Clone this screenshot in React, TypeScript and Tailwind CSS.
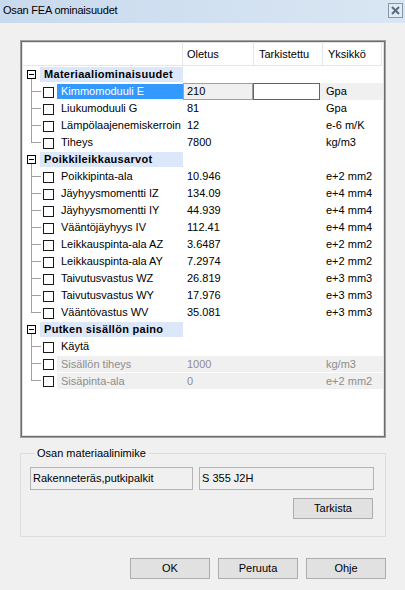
import React from 'react';

type Item = { label: string; value: string; unit: string; state?: 'selected' | 'disabled' };
type Group = { name: string; items: Item[] };

const groups: Group[] = [
  {
    name: 'Materiaaliominaisuudet',
    items: [
      { label: 'Kimmomoduuli E', value: '210', unit: 'Gpa', state: 'selected' },
      { label: 'Liukumoduuli G', value: '81', unit: 'Gpa' },
      { label: 'Lämpölaajenemiskerroin', value: '12', unit: 'e-6 m/K' },
      { label: 'Tiheys', value: '7800', unit: 'kg/m3' },
    ],
  },
  {
    name: 'Poikkileikkausarvot',
    items: [
      { label: 'Poikkipinta-ala', value: '10.946', unit: 'e+2 mm2' },
      { label: 'Jäyhyysmomentti IZ', value: '134.09', unit: 'e+4 mm4' },
      { label: 'Jäyhyysmomentti IY', value: '44.939', unit: 'e+4 mm4' },
      { label: 'Vääntöjäyhyys IV', value: '112.41', unit: 'e+4 mm4' },
      { label: 'Leikkauspinta-ala AZ', value: '3.6487', unit: 'e+2 mm2' },
      { label: 'Leikkauspinta-ala AY', value: '7.2974', unit: 'e+2 mm2' },
      { label: 'Taivutusvastus WZ', value: '26.819', unit: 'e+3 mm3' },
      { label: 'Taivutusvastus WY', value: '17.976', unit: 'e+3 mm3' },
      { label: 'Vääntövastus WV', value: '35.081', unit: 'e+3 mm3' },
    ],
  },
  {
    name: 'Putken sisällön paino',
    items: [
      { label: 'Käytä', value: '', unit: '' },
      { label: 'Sisällön tiheys', value: '1000', unit: 'kg/m3', state: 'disabled' },
      { label: 'Sisäpinta-ala', value: '0', unit: 'e+2 mm2', state: 'disabled' },
    ],
  },
];

function Checkbox() {
  return <span className="block w-[11px] h-[11px] border border-[#1a1a1a] bg-white" />;
}

function TreeBranch({ last }: { last: boolean }) {
  return (
    <div className="relative w-[18px] h-[17px] shrink-0">
      <span
        className={
          last
            ? 'absolute left-[8px] top-0 w-px h-[9px] bg-[#a0a0a0]'
            : 'absolute left-[8px] top-0 w-px h-[17px] bg-[#a0a0a0]'
        }
      />
      <span className="absolute left-[8px] top-[8px] h-px w-[10px] bg-[#a0a0a0]" />
    </div>
  );
}

function GroupRow({ name }: { name: string }) {
  return (
    <div className="flex h-[17px]">
      <div className="relative w-[17px] shrink-0">
        <span className="absolute left-[4px] top-[4px] w-[9px] h-[9px] border border-black bg-white" />
        <span className="absolute left-[6px] top-[8px] w-[5px] h-px bg-black" />
        <span className="absolute left-[8px] top-[13px] w-px h-[4px] bg-[#a0a0a0]" />
      </div>
      <div className="w-[143px] mt-px h-[15px] bg-[#dce7fa] pl-[4px] font-bold tracking-[0.3px] leading-[15px] text-black whitespace-nowrap">
        {name}
      </div>
    </div>
  );
}

function ItemRow({ item, last }: { item: Item; last: boolean }) {
  const lead = (
    <>
      <TreeBranch last={last} />
      <div className="w-[16px] shrink-0 pl-[2px] pt-[4px]">
        <Checkbox />
      </div>
    </>
  );

  if (item.state === 'selected') {
    return (
      <div className="flex h-[17px]">
        {lead}
        <div className="w-[126px] mt-px h-[15px] bg-[#3399ff] pl-[4px] leading-[15px] text-white whitespace-nowrap">
          {item.label}
        </div>
        <div className="w-[70px] h-[17px] border border-[#a0a0a0] bg-[#f0f0f0] pl-[3px] leading-[15px] text-black">
          {item.value}
        </div>
        <div className="w-[67px] h-[17px] border border-[#646464] bg-white" />
        <div className="flex-1 h-[17px] bg-[#f0f0f0] pl-[6px] leading-[17px] text-black">{item.unit}</div>
      </div>
    );
  }

  if (item.state === 'disabled') {
    return (
      <div className="flex h-[17px]">
        {lead}
        <div className="flex flex-1 mt-px h-[16px] bg-[#f0f0f0] leading-[16px] text-[#8d8d8d]">
          <div className="w-[126px] pl-[4px] whitespace-nowrap">{item.label}</div>
          <div className="w-[70px] pl-[4px]">{item.value}</div>
          <div className="w-[69px]" />
          <div className="flex-1 pl-[4px] whitespace-nowrap">{item.unit}</div>
        </div>
      </div>
    );
  }

  return (
    <div className="flex h-[17px] leading-[17px] text-black">
      {lead}
      <div className="w-[126px] pl-[4px] whitespace-nowrap">{item.label}</div>
      <div className="w-[70px] pl-[4px]">{item.value}</div>
      <div className="w-[69px]" />
      <div className="flex-1 pl-[4px] whitespace-nowrap">{item.unit}</div>
    </div>
  );
}

function PropertyGrid() {
  return (
    <div className="h-[398px] border border-[#a0a0a0]">
      <div className="h-full border border-[#6d6d6d]">
        <div className="h-full border border-[#e3e3e3] bg-white">
          <div className="flex h-[23px] leading-[22px] text-black">
            <div className="w-[160px] border-r border-b border-[#e1e6ec]" />
            <div className="w-[71px] border-r border-b border-[#e1e6ec] pl-[4px]">Oletus</div>
            <div className="w-[69px] border-r border-b border-[#e1e6ec] pl-[5px]">Tarkistettu</div>
            <div className="w-[59px] border-r border-b border-[#e1e6ec] pl-[5px]">Yksikkö</div>
            <div className="flex-1" />
          </div>
          {groups.map((g) => (
            <div key={g.name}>
              <GroupRow name={g.name} />
              {g.items.map((it, i) => (
                <ItemRow key={it.label} item={it} last={i === g.items.length - 1} />
              ))}
            </div>
          ))}
        </div>
      </div>
    </div>
  );
}

function Button({ label }: { label: string }) {
  return (
    <button
      type="button"
      className="w-[80px] h-[21px] border border-[#adadad] bg-[#e1e1e1] text-black text-[11px] leading-[19px] text-center"
    >
      {label}
    </button>
  );
}

export default function App() {
  return (
    <div className="w-[405px] h-[590px] bg-[#f0f0f0] text-[11px] font-['Liberation_Sans',Arial,sans-serif] overflow-hidden">
      {/* title bar */}
      <div className="flex justify-between h-[23px] bg-linear-to-r from-[#c9daee] to-[#d9e6f3] pl-[3px] pr-[2px] pt-[3px]">
        <span className="leading-[14px] text-black tracking-[-0.2px]">Osan FEA ominaisuudet</span>
        <span className="flex items-center justify-center w-[15px] h-[15px] border border-[#8596ad] bg-[#e2eaf4]">
          <svg width="9" height="9" viewBox="0 0 9 9">
            <path d="M1 1 L8 8 M8 1 L1 8" stroke="#5a6a80" strokeWidth="2" />
          </svg>
        </span>
      </div>

      <div className="pl-[20px] pr-[19px] pt-[17px]">
        <PropertyGrid />

        <fieldset className="mt-[9px] border border-[#dcdcdc] pl-[9px] pr-[11px] pt-[7px] pb-[17px]">
          <legend className="ml-[4px] px-[3px] leading-[13px] text-black">Osan materiaalinimike</legend>
          <div className="flex gap-[6px]">
            <div className="w-[163px] h-[23px] border border-[#b4b4b4] bg-[#f0f0f0] pl-[2px] leading-[21px] text-black whitespace-nowrap">
              Rakenneteräs,putkipalkit
            </div>
            <div className="flex-1 h-[23px] border border-[#b4b4b4] bg-[#f0f0f0] pl-[2px] leading-[21px] text-black">
              S 355 J2H
            </div>
          </div>
          <div className="flex justify-end mt-[8px] pr-px">
            <Button label="Tarkista" />
          </div>
        </fieldset>

        <div className="flex justify-end gap-[8px] mt-[21px]">
          <Button label="OK" />
          <Button label="Peruuta" />
          <Button label="Ohje" />
        </div>
      </div>
    </div>
  );
}
